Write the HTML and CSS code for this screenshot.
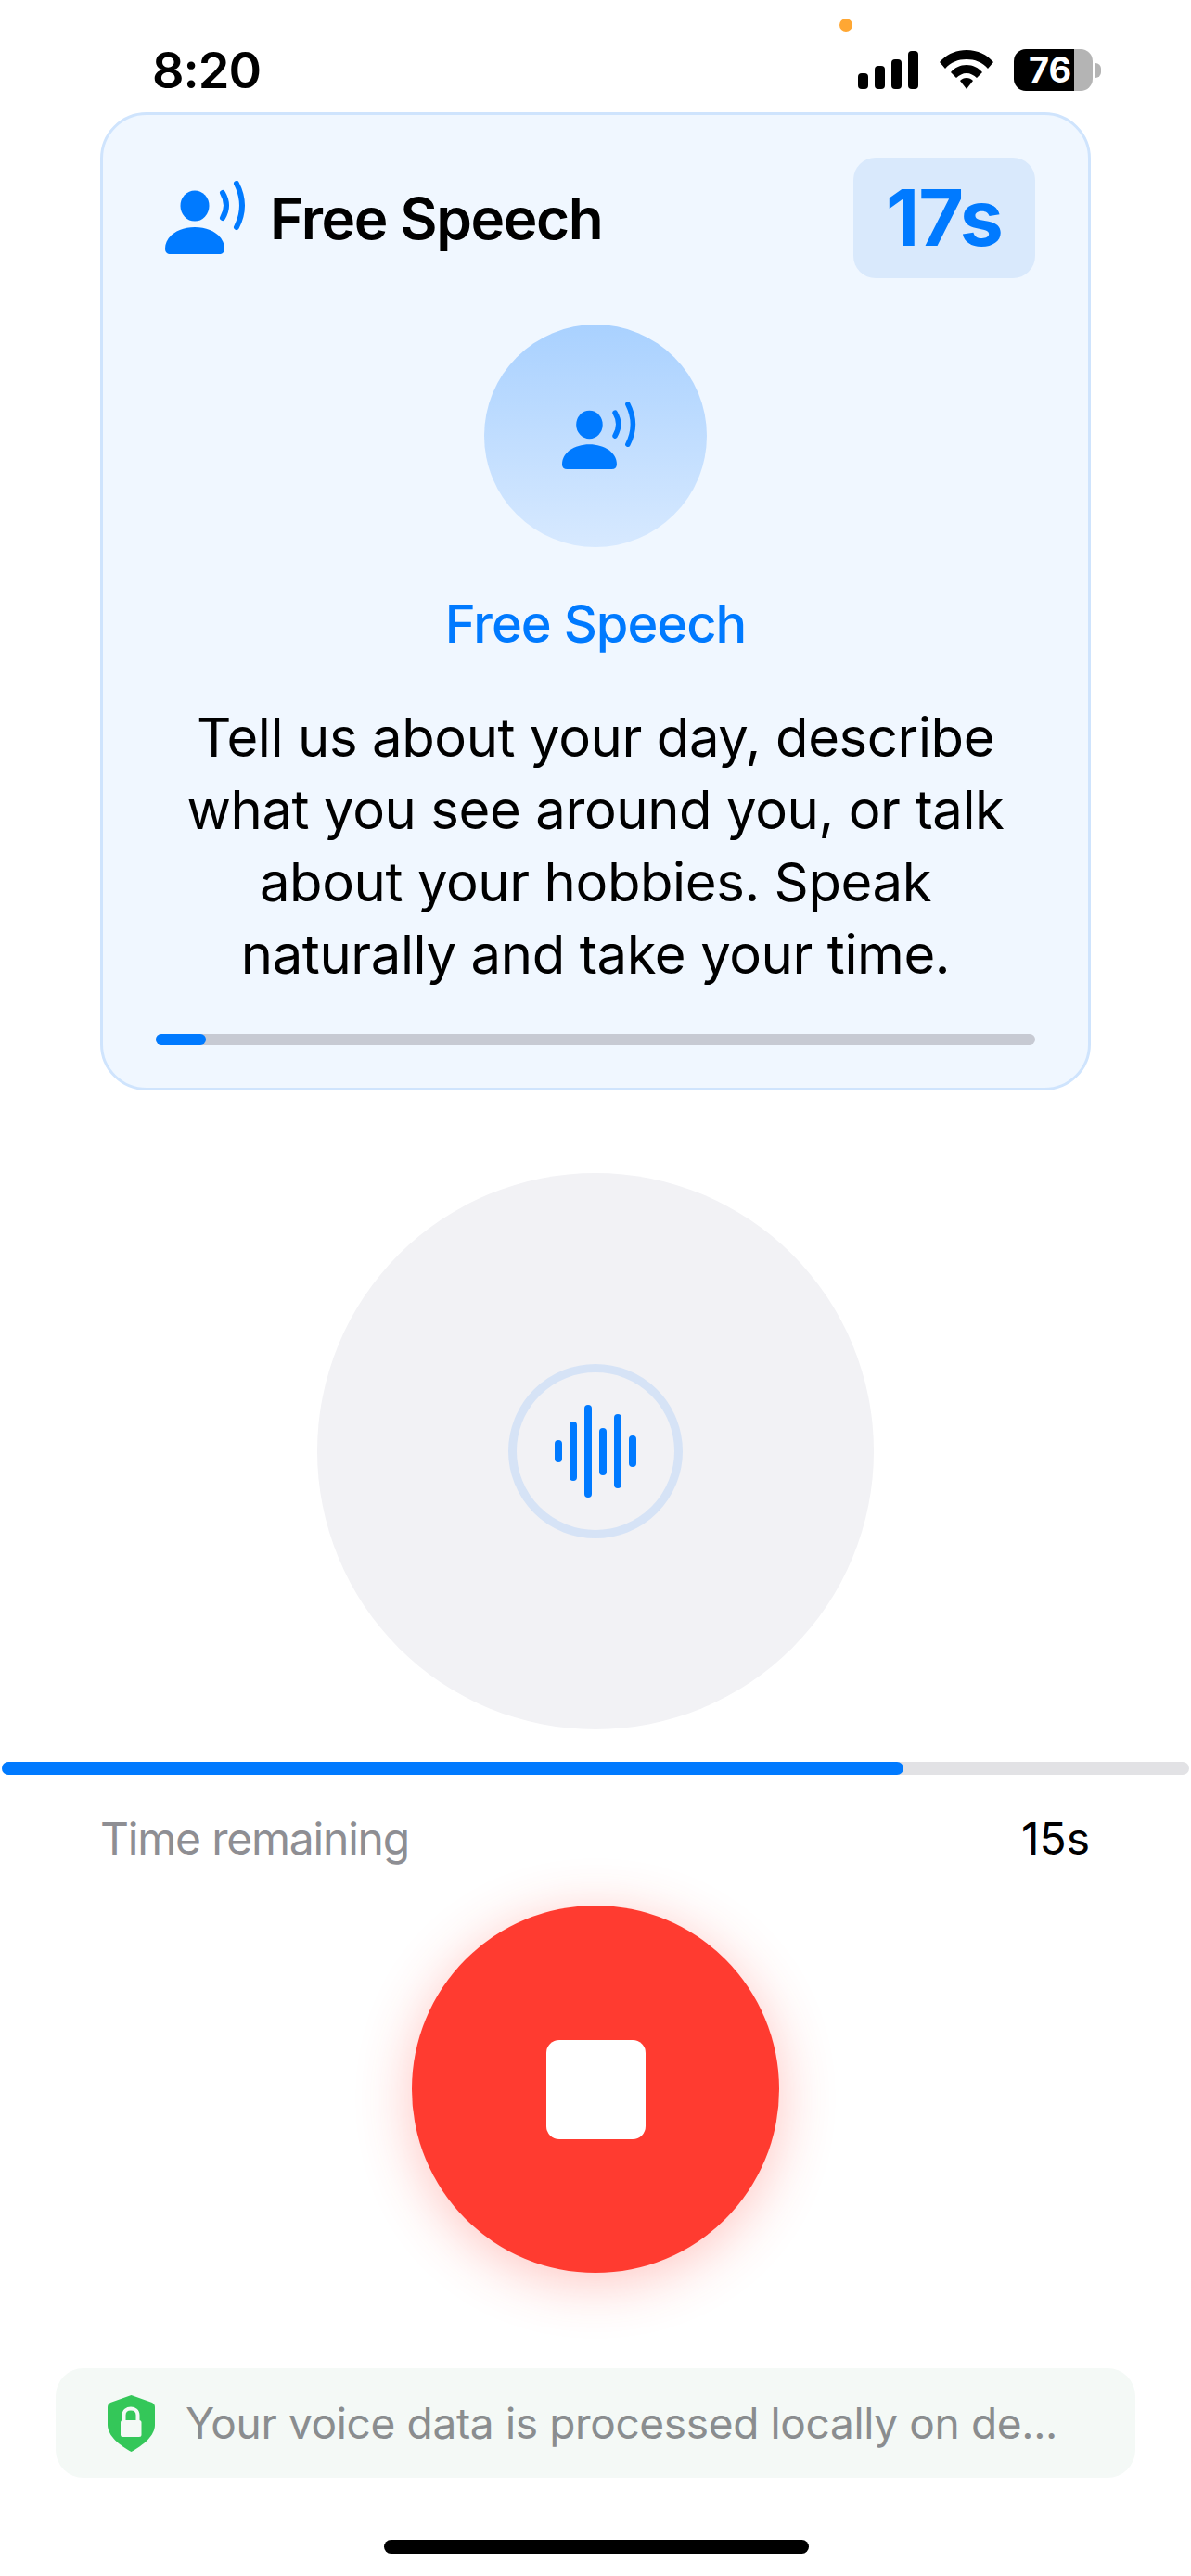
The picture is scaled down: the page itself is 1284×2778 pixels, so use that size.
FILE: index.html
```html
<!DOCTYPE html>
<html lang="en">
<head>
  <meta charset="UTF-8">
  <meta name="viewport" content="width=device-width, initial-scale=1.0">
  <title>Free Speech</title>
  <link rel="stylesheet" href="styles.css">
</head>
<body>
  <svg class="defs" width="0" height="0">
    <symbol id="speaker" viewBox="0 0 88 80">
      <ellipse cx="32" cy="27" rx="15.5" ry="16.5" fill="currentColor"/>
      <path d="M0 73C0 60 14 50 32 50C50 50 64 60 64 73C64 77 62 79 58 79H6C2 79 0 77 0 73Z" fill="currentColor"/>
      <path d="M62 13Q70 26.5 62 40M77 3Q89 26.5 77 50" fill="none" stroke="currentColor" stroke-width="6" stroke-linecap="round"/>
    </symbol>
  </svg>

  <header class="status-bar">
    <span class="clock">8:20</span>
    <span class="mic-dot"></span>
    <div class="status-icons">
      <svg class="signal" viewBox="0 0 65 41">
        <rect x="0" y="24" width="11" height="17" rx="4"/>
        <rect x="18" y="16" width="11" height="25" rx="4"/>
        <rect x="36" y="9" width="11" height="32" rx="4"/>
        <rect x="54" y="0" width="11" height="41" rx="4"/>
      </svg>
      <svg class="wifi" viewBox="0 0 58 42">
        <path d="M29 0C41 0 51 5 58 13L52 20C46 13 38 10 29 10C20 10 12 13 6 20L0 13C7 5 17 0 29 0Z"/>
        <path d="M29 16C36 16 42 19 46 24L40 30C37 27 33 25 29 25C25 25 21 27 18 30L12 24C16 19 22 16 29 16Z"/>
        <path d="M29 30C32 30 34 31 36 33L29 42L22 33C24 31 26 30 29 30Z"/>
      </svg>
      <div class="battery">
        <div class="battery-body">76</div>
        <span class="battery-cap"></span>
      </div>
    </div>
  </header>

  <section class="prompt-card">
    <div class="prompt-head">
      <div class="prompt-name">
        <svg class="speaker-large"><use href="#speaker"/></svg>
        <h1>Free Speech</h1>
      </div>
      <div class="countdown">17s</div>
    </div>
    <div class="prompt-circle">
      <svg class="speaker-small"><use href="#speaker"/></svg>
    </div>
    <h2>Free Speech</h2>
    <p>Tell us about your day, describe what you see around you, or talk about your hobbies. Speak naturally and take your time.</p>
    <div class="prompt-progress"><div class="prompt-progress-fill" style="width: 5.7%"></div></div>
  </section>

  <div class="level-circle">
    <div class="level-ring">
      <div class="wave">
        <span class="w1"></span>
        <span class="w2"></span>
        <span class="w3"></span>
        <span class="w4"></span>
        <span class="w5"></span>
        <span class="w6"></span>
      </div>
    </div>
  </div>

  <div class="time-bar"><div class="time-bar-fill" style="width: 75.9%"></div></div>
  <div class="time-row">
    <span class="time-label">Time remaining</span>
    <span class="time-value">15s</span>
  </div>

  <button class="stop-btn" type="button"><span class="stop-square"></span></button>

  <footer class="privacy">
    <svg class="shield" viewBox="0 0 51 61">
      <path d="M25.5 0L48 8Q51 9.5 51 13V32C51 44 38 54 25.5 61C13 54 0 44 0 32V13Q0 9.5 3 8Z" fill="#34c759"/>
      <path d="M17.5 28V21.5C17.5 17 21 14.5 25 14.5C29 14.5 32.5 17 32.5 21.5V28" fill="none" stroke="#f4f9f6" stroke-width="4"/>
      <rect x="14" y="27" width="22.5" height="18" rx="2.5" fill="#f4f9f6"/>
    </svg>
    <span class="privacy-text">Your voice data is processed locally on de...</span>
  </footer>

  <div class="home-indicator"></div>
</body>
</html>
```

FILE: styles.css
```css
* {
  box-sizing: border-box;
}

body {
  font-family: Inter, "Noto Sans", sans-serif;
  background-color: #ffffff;
  color: #000000;
  margin: 0;
  width: 1284px;
  height: 2778px;
  position: relative;
  overflow: hidden;
}

.defs {
  position: absolute;
}

/* status bar */
.status-bar {
  height: 121px;
  padding: 53px 97px 0 164px;
  display: flex;
  justify-content: space-between;
  align-items: flex-start;
}

.clock {
  font-size: 54px;
  line-height: 46px;
  font-weight: 600;
  letter-spacing: -1px;
}

.mic-dot {
  position: absolute;
  left: 905px;
  top: 20px;
  width: 14px;
  height: 14px;
  border-radius: 50%;
  background: #ffa733;
}

.status-icons {
  display: flex;
  align-items: flex-start;
}

.signal {
  width: 65px;
  height: 41px;
  margin: 2px 23px 0 0;
}

.wifi {
  width: 58px;
  height: 42px;
  margin: 1px 22px 0 0;
}

.battery {
  display: flex;
  align-items: center;
}

.battery-body {
  width: 85px;
  height: 45px;
  border-radius: 13px;
  background: linear-gradient(to right, #000000 76%, #b4b4b4 76%);
  color: #ffffff;
  font-size: 38px;
  font-weight: 700;
  line-height: 45px;
  padding-left: 16px;
}

.battery-cap {
  width: 6px;
  height: 16px;
  margin-left: 3px;
  border-radius: 0 8px 8px 0;
  background: #b4b4b4;
}

/* prompt card */
.prompt-card {
  width: 1068px;
  height: 1055px;
  margin-left: 108px;
  padding: 46px 57px 0;
  background: #f0f7ff;
  border: 3px solid #cfe4fd;
  border-radius: 50px;
  text-align: center;
}

.prompt-head {
  display: flex;
  justify-content: space-between;
  align-items: center;
}

.prompt-name {
  display: flex;
  align-items: center;
  gap: 25px;
  padding-left: 10px;
}

.speaker-large {
  width: 88px;
  height: 80px;
  color: #007aff;
}

h1 {
  margin: 0;
  font-size: 62px;
  font-weight: 600;
  letter-spacing: -1.4px;
}

.countdown {
  width: 196px;
  height: 130px;
  border-radius: 24px;
  background: #d9e9fc;
  color: #007aff;
  font-size: 84px;
  font-weight: 700;
  line-height: 130px;
  letter-spacing: -1px;
}

.prompt-circle {
  width: 240px;
  height: 240px;
  margin: 50px auto 0;
  padding-left: 8px;
  border-radius: 50%;
  background: linear-gradient(to bottom, #a9d1ff, #d7e9ff);
  display: flex;
  justify-content: center;
  align-items: center;
}

.speaker-small {
  width: 81px;
  height: 74px;
  color: #007aff;
}

h2 {
  margin: 50px 0 0;
  font-size: 56px;
  line-height: 66px;
  font-weight: 500;
  letter-spacing: -1px;
  color: #007aff;
}

.prompt-card p {
  margin: 50px 0 0;
  font-size: 58px;
  line-height: 78px;
  font-weight: 400;
  letter-spacing: -0.4px;
}

.prompt-progress {
  height: 12px;
  margin-top: 47px;
  border-radius: 6px;
  background: #c7cad3;
}

.prompt-progress-fill {
  height: 100%;
  border-radius: 6px;
  background: #007aff;
}

/* level meter */
.level-circle {
  width: 600px;
  height: 600px;
  margin: 89px auto 0;
  border-radius: 50%;
  background: #f2f2f5;
  display: flex;
  justify-content: center;
  align-items: center;
}

.level-ring {
  width: 188px;
  height: 188px;
  border: 9px solid #d6e3f6;
  border-radius: 50%;
  display: flex;
  justify-content: center;
  align-items: center;
}

.wave {
  display: flex;
  align-items: center;
  gap: 8px;
}

.wave span {
  width: 8px;
  border-radius: 4px;
  background: #007aff;
}

.w1 { height: 24px; }
.w2 { height: 64px; }
.w3 { height: 100px; }
.w4 { height: 51px; }
.w5 { height: 80px; }
.w6 { height: 34px; }

/* time remaining */
.time-bar {
  height: 14px;
  margin: 35px 2px 0;
  border-radius: 7px;
  background: #e2e2e5;
}

.time-bar-fill {
  height: 100%;
  border-radius: 7px;
  background: #007aff;
}

.time-row {
  display: flex;
  justify-content: space-between;
  align-items: center;
  margin: 41px 109px 0 108px;
  font-size: 48px;
  line-height: 56px;
}

.time-label {
  color: #8e8e93;
  letter-spacing: -1.2px;
}

.time-value {
  font-weight: 400;
}

/* stop button */
.stop-btn {
  display: flex;
  justify-content: center;
  align-items: center;
  width: 396px;
  height: 396px;
  margin: 44px auto 0;
  padding: 0;
  border: none;
  border-radius: 50%;
  background: #ff3b30;
  box-shadow: 0 10px 60px rgba(255, 59, 48, 0.3);
}

.stop-square {
  width: 107px;
  height: 107px;
  border-radius: 14px;
  background: #ffffff;
}

/* privacy note */
.privacy {
  display: flex;
  align-items: center;
  gap: 33px;
  height: 118px;
  margin: 103px 60px 0;
  padding: 0 40px 0 56px;
  border-radius: 30px;
  background: #f4f9f6;
}

.shield {
  flex: none;
  width: 51px;
  height: 61px;
}

.privacy-text {
  font-size: 46px;
  color: #8a8d8f;
  white-space: nowrap;
  letter-spacing: -0.35px;
}

.home-indicator {
  position: absolute;
  left: 414px;
  top: 2739px;
  width: 458px;
  height: 15px;
  border-radius: 8px;
  background: #000000;
}
```
